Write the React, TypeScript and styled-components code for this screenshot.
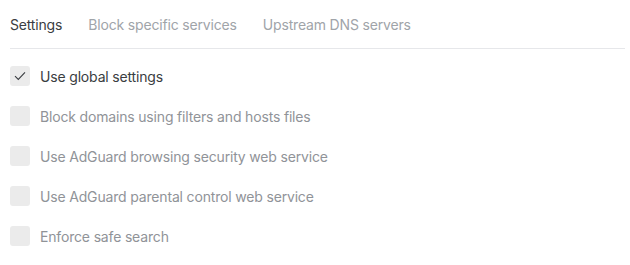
import React from "react";
import styled, { createGlobalStyle } from "styled-components";

const Global = createGlobalStyle`
  body {
    margin: 0;
    background: #fff;
    font-family: Inter, "Noto Sans", sans-serif;
  }
`;

const Page = styled.div`
  padding: 0 5px 0 10px;
`;

const Tabs = styled.div`
  display: flex;
  gap: 26px;
  height: 48px;
  align-items: center;
  border-bottom: 1px solid #e6e7ea;
`;

const Tab = styled.div<{ $active?: boolean }>`
  font-size: 14px;
  color: ${(p) => (p.$active ? "#3a3d41" : "#a0a4a9")};
  letter-spacing: -0.17px;
`;

const List = styled.div`
  display: flex;
  flex-direction: column;
  padding-top: 7px;
`;

const Row = styled.label`
  display: flex;
  align-items: center;
  height: 40px;
  gap: 10px;
`;

const Box = styled.span`
  width: 20px;
  height: 20px;
  border-radius: 3px;
  background: #ebebeb;
  display: flex;
  align-items: center;
  justify-content: center;
`;

const Label = styled.span<{ $disabled?: boolean }>`
  font-size: 14px;
  color: ${(p) => (p.$disabled ? "#909398" : "#3a3d41")};
  letter-spacing: -0.17px;
`;

const items = [
  "Block domains using filters and hosts files",
  "Use AdGuard browsing security web service",
  "Use AdGuard parental control web service",
  "Enforce safe search",
];

export default function App() {
  return (
    <Page>
      <Global />
      <Tabs>
        <Tab $active>Settings</Tab>
        <Tab>Block specific services</Tab>
        <Tab>Upstream DNS servers</Tab>
      </Tabs>
      <List>
        <Row>
          <Box>
            <svg width="12" height="10" viewBox="0 0 12 10">
              <path d="M1 5.2 L4.3 8.4 L11 1.4" fill="none" stroke="#3a3d41" strokeWidth="1.1" />
            </svg>
          </Box>
          <Label>Use global settings</Label>
        </Row>
        {items.map((t) => (
          <Row key={t}>
            <Box />
            <Label $disabled>{t}</Label>
          </Row>
        ))}
      </List>
    </Page>
  );
}
